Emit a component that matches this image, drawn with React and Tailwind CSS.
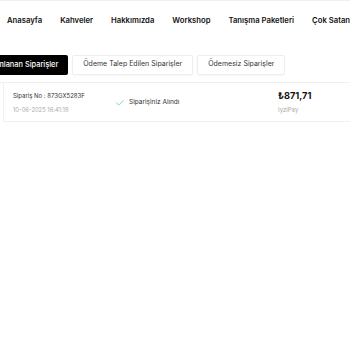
import { Check } from 'lucide-react';

const navItems = ['Anasayfa', 'Kahveler', 'Hakkımızda', 'Workshop', 'Tanışma Paketleri', 'Çok Satanlar'];

function App() {
  return (
    <div className="w-[350px] h-[350px] overflow-hidden bg-white font-['Inter',sans-serif] text-[#111]">
      <div className="h-px bg-[#f0f0f0]" />
      <nav className="flex gap-[18px] pl-[7px] pt-[14px] whitespace-nowrap">
        {navItems.map((item) => (
          <span key={item} className="text-[7.7px] font-semibold">{item}</span>
        ))}
      </nav>

      <div className="flex gap-[4px] mt-[28px] -ml-[32px] whitespace-nowrap">
        <button className="h-[20px] px-[10px] bg-black text-white text-[7.4px] font-medium rounded-[2px]">
          Tamamlanan Siparişler
        </button>
        <button className="h-[20px] px-[10px] bg-white text-[#333] text-[7px] border border-[#eee] rounded-[2px] shadow-[0_1px_2px_rgba(0,0,0,0.03)]">
          Ödeme Talep Edilen Siparişler
        </button>
        <button className="h-[20px] px-[10px] bg-white text-[#333] text-[7px] border border-[#eee] rounded-[2px] shadow-[0_1px_2px_rgba(0,0,0,0.03)]">
          Ödemesiz Siparişler
        </button>
      </div>

      <div className="mt-[7px] border-t border-[#f0f0f0]">
        <div className="ml-[3px] w-[360px] h-[39px] border-l border-b border-[#f0f0f0] flex items-center pl-[9px] pt-[2px]">
          <div className="w-[102px] flex flex-col gap-[6px]">
            <span className="text-[6px] text-[#333]">Sipariş No : 873GX5283F</span>
            <span className="text-[5.8px] text-[#aaa]">10-06-2025 16:41:18</span>
          </div>
          <div className="w-[163px] flex items-center gap-[4px]">
            <Check size={10} strokeWidth={1.5} className="text-[#4cb86a]" />
            <span className="text-[6.5px] text-[#333]">Siparişiniz Alındı</span>
          </div>
          <div className="flex flex-col gap-[3px] -mt-[2px]">
            <span className="text-[9.2px] font-bold">₺871,71</span>
            <span className="text-[6px] text-[#aaa]">IyziPay</span>
          </div>
        </div>
      </div>
    </div>
  );
}

export default App;
